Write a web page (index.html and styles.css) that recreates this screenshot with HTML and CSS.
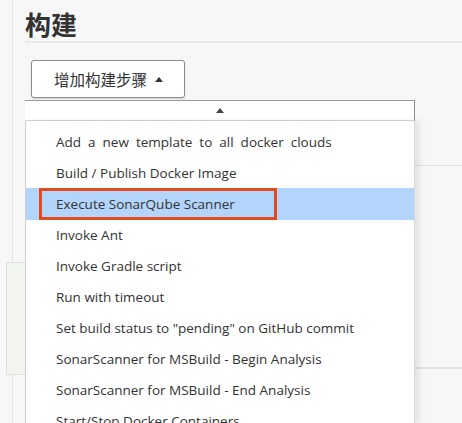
FILE: index.html
```html
<!DOCTYPE html>
<html lang="zh-CN">
<head>
    <meta charset="UTF-8"/>
    <title>构建</title>
    <link rel="stylesheet" href="styles.css">
</head>
<body>
    <div class="main">
        <h1 class="title">构建</h1>
        <div class="actions">
            <button class="add-btn">增加构建步骤
                <svg class="caret" width="8" height="5" viewBox="0 0 8 5"><path d="M0 5 L4 0 L8 5 Z" fill="#333"/></svg>
            </button>
        </div>
        <!-- 下面被菜单盖住的内容 -->
        <div class="steps">
            <div class="note"></div>
        </div>
    </div>

    <!-- 下拉菜单 -->
    <div class="dropdown">
        <div class="dropdown-head">
            <svg width="8" height="5" viewBox="0 0 8 5"><path d="M0 5 L4 0 L8 5 Z" fill="#444"/></svg>
        </div>
        <ul class="menu">
            <li class="wide">Add a new template to all docker clouds</li>
            <li>Build / Publish Docker Image</li>
            <li class="active"><span class="mark"></span>Execute SonarQube Scanner</li>
            <li>Invoke Ant</li>
            <li>Invoke Gradle script</li>
            <li>Run with timeout</li>
            <li>Set build status to "pending" on GitHub commit</li>
            <li>SonarScanner for MSBuild - Begin Analysis</li>
            <li>SonarScanner for MSBuild - End Analysis</li>
            <li>Start/Stop Docker Containers</li>
        </ul>
    </div>
</body>
</html>
```

FILE: styles.css
```css
* {
    margin: 0;
    padding: 0;
    box-sizing: border-box;
}

ul {
    list-style: none;
}

body {
    background: #f7f7f7;
    font-family: "Open Sans", "Noto Sans CJK SC", sans-serif;
    color: #333;
    height: 423px;
    overflow: hidden;
}

.main {
    margin-left: 12px;
    padding-left: 12px;
    border-left: 1px solid #e4e4e4;
    height: 423px;
}

.title {
    font: bold 26px "Noto Sans CJK SC", sans-serif;
    line-height: 34px;
    padding-top: 7px;
    color: #333;
    border-bottom: 2px solid #e9e9e9;
}

.actions {
    padding: 17px 0 0 6px;
}

.add-btn {
    width: 154px;
    height: 38px;
    background: #fff;
    border: 1px solid #8c8c8c;
    border-radius: 3px;
    box-shadow: 0 1px 2px rgba(0, 0, 0, 0.15);
    font: 15.5px "Noto Sans CJK SC", sans-serif;
    color: #333;
    text-align: left;
    padding-left: 22px;
    display: flex;
    align-items: center;
    gap: 8px;
}

.steps {
    margin-top: 67px;
    height: 204px;
    border-top: 1px solid #e3e3e3;
    border-bottom: 2px solid #e3e3e3;
}

.note {
    margin: 96px 0 0 -19px;
    width: 40px;
    height: 113px;
    border: 1px solid #dfe2d9;
    background: #f2f4ef;
}

.dropdown {
    position: absolute;
    left: 25px;
    top: 100px;
    width: 390px;
    bottom: 0;
}

.dropdown-head {
    height: 21px;
    background: #fff;
    border-top: 1px solid #9a9a9a;
    border-right: 1px solid #8a8a8a;
    border-bottom: 1px solid #d6d6d6;
    display: flex;
    justify-content: center;
    align-items: center;
}

.menu {
    background: #fff;
    border-left: 1px solid #cfcfcf;
    border-right: 1px solid #d8d8d8;
    box-shadow: 5px 0 6px rgba(0, 0, 0, 0.08);
    height: 302px;
    padding-top: 6px;
    font-size: 13.5px;
}

.menu li {
    height: 31px;
    line-height: 31px;
    padding-left: 30px;
    white-space: nowrap;
    position: relative;
}

.menu li.wide {
    word-spacing: 3.5px;
}

.menu li.active {
    background: #b3d4fb;
    height: 32px;
    margin-top: -1px;
    line-height: 33px;
}

.menu li .mark {
    position: absolute;
    left: 13px;
    top: 0;
    width: 238px;
    height: 32px;
    border: 3px solid #e34b1f;
}
```
